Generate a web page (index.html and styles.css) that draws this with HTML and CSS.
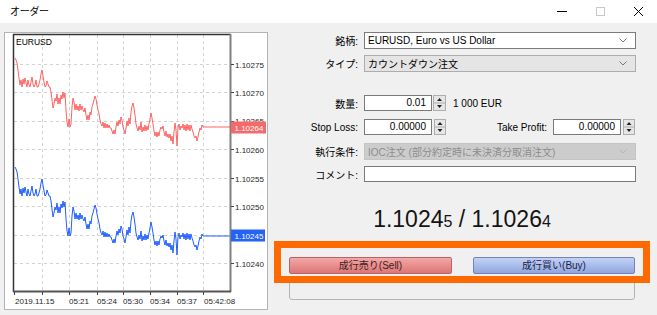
FILE: index.html
```html
<!DOCTYPE html>
<html lang="ja">
<head>
<meta charset="utf-8">
<title>オーダー</title>
<link rel="stylesheet" href="styles.css">
</head>
<body>
<div class="window">
  <div class="titlebar">
    <span class="title">オーダー</span>
    <div class="controls">
      <svg class="ctl ctl-min" width="11" height="11" viewBox="0 0 11 11"><line x1="0" y1="5.5" x2="10" y2="5.5" stroke="#000" stroke-width="1"/></svg>
      <svg class="ctl ctl-max" width="11" height="11" viewBox="0 0 11 11"><rect x="1.5" y="1.5" width="8" height="8" fill="none" stroke="#c8c8c8" stroke-width="1"/></svg>
      <svg class="ctl ctl-close" width="11" height="11" viewBox="0 0 11 11"><path d="M1 1 L10 10 M10 1 L1 10" stroke="#000" stroke-width="1" fill="none"/></svg>
    </div>
  </div>

  <div class="main">
    <div class="chart">
      <svg class="chart-svg" width="262" height="276" viewBox="5 33 262 276">
        <defs>
          <polyline id="tick-path" fill="none"
            points="15,58 16,60 17,63 18,70 19,78 20,85 21,80 22,87 23,79 24,84 25,78 26,83 27,87 28,80 29,85 30,87 31,82 32,77 33,84 34,87 35,85 36,80 37,87 38,87 39,84 40,80 41,74 42,70 43,76 44,82 45,87 46,86 47,81 48,84 49,87 50,87 51,92 52,100 53,108 54,104 55,98 56,101 57,94 58,104 59,98 60,104 61,95 62,99 63,92 64,98 65,93 66,110 67,122 68,127 69,119 70,127 71,124 72,107 73,98 74,102 75,110 76,104 77,110 78,106 79,111 80,104 81,110 82,106 83,110 84,112 85,108 86,115 87,120 88,115 89,120 90,112 91,115 92,107 93,104 94,100 95,96 96,99 97,105 98,110 99,114 100,120 101,124 102,126 103,122 104,128 105,123 106,128 107,124 108,128 109,125 110,128 111,128 112,131 113,134 114,130 115,134 116,127 117,122 118,126 119,120 120,124 121,117 122,120 123,127 124,130 125,134 126,128 127,121 128,126 129,118 130,124 131,112 132,106 133,103 134,108 135,115 136,124 137,128 138,131 139,126 140,130 141,122 142,132 143,127 144,131 145,125 146,131 147,126 148,130 149,124 150,119 151,113 152,118 153,124 154,131 155,136 156,132 157,137 158,132 159,136 160,130 161,127 162,129 163,126 164,132 165,136 166,131 167,137 168,134 169,138 170,134 171,141 172,136 173,144 174,132 175,123 176,130 177,146 178,128 179,124 180,130 181,126 182,128 183,124 184,130 185,125 186,131 187,124 188,130 189,125 190,131 191,125 192,129 193,132 194,136 195,138 196,136 197,141 198,137 199,132 200,128 201,130 202,125 203,127 230,127"/>
        </defs>

        <g class="grid" stroke="#d2d2d2" stroke-width="1" stroke-dasharray="3,3">
          <line x1="14" y1="64.5" x2="230" y2="64.5"/>
          <line x1="14" y1="92.5" x2="230" y2="92.5"/>
          <line x1="14" y1="121.5" x2="230" y2="121.5"/>
          <line x1="14" y1="149.5" x2="230" y2="149.5"/>
          <line x1="14" y1="178.5" x2="230" y2="178.5"/>
          <line x1="14" y1="206.5" x2="230" y2="206.5"/>
          <line x1="14" y1="235.5" x2="230" y2="235.5"/>
          <line x1="14" y1="263.5" x2="230" y2="263.5"/>
          <line x1="42.5" y1="35" x2="42.5" y2="291"/>
          <line x1="69.5" y1="35" x2="69.5" y2="291"/>
          <line x1="97.5" y1="35" x2="97.5" y2="291"/>
          <line x1="123.5" y1="35" x2="123.5" y2="291"/>
          <line x1="150.5" y1="35" x2="150.5" y2="291"/>
          <line x1="177.5" y1="35" x2="177.5" y2="291"/>
          <line x1="203.5" y1="35" x2="203.5" y2="291"/>
        </g>

        <use href="#tick-path" stroke="#ff6464" stroke-width="1"/>
        <use href="#tick-path" stroke="#1f5fff" stroke-width="1" transform="translate(0,109)"/>

        <g class="frame">
          <line x1="13.5" y1="34" x2="13.5" y2="292" stroke="#333" stroke-width="1.5"/>
          <line x1="13" y1="34.5" x2="231" y2="34.5" stroke="#333" stroke-width="1.5"/>
          <line x1="230.5" y1="34" x2="230.5" y2="292" stroke="#808080" stroke-width="2"/>
          <line x1="13" y1="291.5" x2="231" y2="291.5" stroke="#555" stroke-width="2"/>
        </g>

        <g class="ticks" stroke="#444" stroke-width="1">
          <line x1="231" y1="64.5" x2="234" y2="64.5"/>
          <line x1="231" y1="92.5" x2="234" y2="92.5"/>
          <line x1="231" y1="121.5" x2="234" y2="121.5"/>
          <line x1="231" y1="149.5" x2="234" y2="149.5"/>
          <line x1="231" y1="178.5" x2="234" y2="178.5"/>
          <line x1="231" y1="206.5" x2="234" y2="206.5"/>
          <line x1="231" y1="235.5" x2="234" y2="235.5"/>
          <line x1="231" y1="263.5" x2="234" y2="263.5"/>
          <line x1="14.5" y1="292" x2="14.5" y2="295"/>
          <line x1="42.5" y1="292" x2="42.5" y2="295"/>
          <line x1="69.5" y1="292" x2="69.5" y2="295"/>
          <line x1="97.5" y1="292" x2="97.5" y2="295"/>
          <line x1="123.5" y1="292" x2="123.5" y2="295"/>
          <line x1="150.5" y1="292" x2="150.5" y2="295"/>
          <line x1="177.5" y1="292" x2="177.5" y2="295"/>
          <line x1="203.5" y1="292" x2="203.5" y2="295"/>
        </g>

        <text class="sym" x="16" y="44.5">EURUSD</text>

        <g class="axis">
          <text x="235" y="67.5">1.10275</text>
          <text x="235" y="95.5">1.10270</text>
          <text x="235" y="123.5">1.10265</text>
          <text x="235" y="152.5">1.10260</text>
          <text x="235" y="181.5">1.10255</text>
          <text x="235" y="209.5">1.10250</text>
          <text x="235" y="266.5">1.10240</text>
          <text x="15" y="303.5">2019.11.15</text>
          <text x="69" y="303.5">05:21</text>
          <text x="97" y="303.5">05:24</text>
          <text x="123" y="303.5">05:30</text>
          <text x="150" y="303.5">05:34</text>
          <text x="177" y="303.5">05:37</text>
          <text x="204" y="303.5">05:42:08</text>
        </g>

        <rect x="231" y="121.5" width="35" height="12" fill="#f46a6a"/>
        <text class="tag" x="234.5" y="130.5">1.10264</text>
        <rect x="231" y="229.5" width="34" height="12" fill="#2463f4"/>
        <text class="tag" x="234.5" y="238.5">1.10245</text>
      </svg>
    </div>

    <div class="form">
      <div class="row r-symbol">
        <span class="lbl">銘柄:</span>
        <div class="combo combo-white"><span>EURUSD, Euro vs US Dollar</span>
          <svg class="chev" width="8" height="5" viewBox="0 0 8 5"><polyline points="0.5,0.5 4,4 7.5,0.5" fill="none" stroke="#777" stroke-width="1"/></svg>
        </div>
      </div>
      <div class="row r-type">
        <span class="lbl">タイプ:</span>
        <div class="combo combo-grey"><span>カウントダウン注文</span>
          <svg class="chev" width="8" height="5" viewBox="0 0 8 5"><polyline points="0.5,0.5 4,4 7.5,0.5" fill="none" stroke="#777" stroke-width="1"/></svg>
        </div>
      </div>
      <div class="row r-vol">
        <span class="lbl">数量:</span>
        <div class="num">0.01</div>
        <svg class="spin spin-a" width="13" height="16" viewBox="0 0 13 16"><rect x="0.5" y="0.5" width="12" height="15" fill="#e6e6e6" stroke="#adadad"/><line x1="1" y1="8" x2="12" y2="8" stroke="#adadad"/><path d="M4 6 L6.5 3 L9 6 Z" fill="#222"/><path d="M4 10 L6.5 13 L9 10 Z" fill="#222"/></svg>
        <span class="unit">1 000 EUR</span>
      </div>
      <div class="row r-sl">
        <span class="lbl">Stop Loss:</span>
        <div class="num">0.00000</div>
        <svg class="spin spin-b" width="12" height="16" viewBox="0 0 12 16"><rect x="0.5" y="0.5" width="11" height="15" fill="#e6e6e6" stroke="#adadad"/><line x1="1" y1="8" x2="11" y2="8" stroke="#adadad"/><path d="M3.5 6 L6 3 L8.5 6 Z" fill="#222"/><path d="M3.5 10 L6 13 L8.5 10 Z" fill="#222"/></svg>
        <span class="lbl lbl-tp">Take Profit:</span>
        <div class="num">0.00000</div>
        <svg class="spin spin-b" width="12" height="16" viewBox="0 0 12 16"><rect x="0.5" y="0.5" width="11" height="15" fill="#e6e6e6" stroke="#adadad"/><line x1="1" y1="8" x2="11" y2="8" stroke="#adadad"/><path d="M3.5 6 L6 3 L8.5 6 Z" fill="#222"/><path d="M3.5 10 L6 13 L8.5 10 Z" fill="#222"/></svg>
      </div>
      <div class="row r-fill">
        <span class="lbl">執行条件:</span>
        <div class="combo combo-dis"><span>IOC注文 (部分約定時に未決済分取消注文)</span>
          <svg class="chev" width="8" height="5" viewBox="0 0 8 5"><polyline points="0.5,0.5 4,4 7.5,0.5" fill="none" stroke="#b4b4b4" stroke-width="1"/></svg>
        </div>
      </div>
      <div class="row r-comment">
        <span class="lbl">コメント:</span>
        <div class="text-input"></div>
      </div>

      <div class="price">1.1024<span class="small">5</span> / 1.1026<span class="small">4</span></div>

      <div class="buttons">
        <div class="btn btn-sell">成行売り(Sell)</div>
        <div class="btn btn-buy">成行買い(Buy)</div>
      </div>
      <div class="status-box"></div>
    </div>
  </div>

  <div class="highlight"></div>
</div>
</body>
</html>
```

FILE: styles.css
```css
* { box-sizing: border-box; }

html, body {
  margin: 0;
  padding: 0;
  background: #f0f0f0;
}

body {
  font-family: "Liberation Sans", "Noto Sans CJK JP", sans-serif;
  font-size: 10px;
  color: #000;
}

.window {
  position: relative;
  width: 657px;
  height: 315px;
  overflow: hidden;
  background: #f0f0f0;
}

/* title bar */
.titlebar {
  height: 23px;
  background: #fff;
  display: flex;
  align-items: center;
  justify-content: space-between;
  padding-left: 10px;
}

.title {
  font-family: "Noto Sans CJK JP", sans-serif;
  font-size: 10px;
  letter-spacing: -0.3px;
  margin-top: -2px;
}

.controls {
  display: flex;
  align-items: center;
  margin-top: -1px;
}

.ctl { display: block; }
.ctl-min { margin-right: 27px; }
.ctl-max { margin-right: 27px; }
.ctl-close { margin-right: 13px; }

/* main */
.main {
  display: flex;
  align-items: flex-start;
  height: 292px;
}

.chart {
  margin: 9px 0 0 4px;
  width: 264px;
  height: 278px;
  background: #fff;
  border: 1px solid #b4b4b4;
}

.chart-svg { display: block; }

.chart-svg text {
  font-family: "Liberation Sans", sans-serif;
  font-size: 8px;
  fill: #1e1e1e;
}

.chart-svg .sym { font-size: 8.5px; fill: #000; }
.chart-svg .tag { fill: #fff; }

/* form */
.form {
  margin-left: 8px;
  width: 381px;
  padding-top: 9px;
  display: flex;
  flex-direction: column;
}

.row {
  display: flex;
  align-items: center;
}

.lbl {
  width: 82px;
  margin-right: 6px;
  text-align: right;
  white-space: nowrap;
}

.r-symbol { height: 17px; }
.r-type { height: 17px; margin-top: 6px; }
.r-vol { height: 16px; margin-top: 23px; }
.r-sl { height: 16px; margin-top: 8px; }
.r-fill { height: 17px; margin-top: 8px; }
.r-comment { height: 16px; margin-top: 6px; }

.combo {
  width: 272px;
  height: 100%;
  display: flex;
  align-items: center;
  justify-content: space-between;
  padding: 0 8px 0 3px;
  white-space: nowrap;
}

.combo-white { background: #fff; border: 1px solid #7a7a7a; }
.combo-grey { background: #e5e5e5; border: 1px solid #adadad; }
.combo-dis { background: #cccccc; border: 1px solid #c4c4c4; color: #8c8c8c; }

.chev { display: block; flex: none; }

.num {
  width: 68px;
  height: 100%;
  background: #fff;
  border: 1px solid #7a7a7a;
  text-align: right;
  padding-right: 5px;
  line-height: 14px;
}

.spin { display: block; flex: none; }
.spin-a { margin-left: 1px; }
.spin-b { margin-left: 2px; }

.unit { margin-left: 7px; }

.lbl-tp {
  width: 101px;
  margin-right: 6px;
}

.text-input {
  width: 272px;
  height: 100%;
  background: #fff;
  border: 1px solid #7a7a7a;
}

.price {
  margin: 25px 0 0 13px;
  width: 346px;
  height: 24px;
  text-align: center;
  font-size: 23px;
  line-height: 24px;
  color: #141414;
  white-space: nowrap;
}

.price .small { font-size: 16px; }

.buttons {
  margin: 26px 0 0 13px;
  width: 346px;
  height: 17px;
  display: flex;
  justify-content: space-between;
}

.btn {
  width: 163px;
  height: 17px;
  border-radius: 2px;
  text-align: center;
  line-height: 15px;
  font-size: 10px;
  white-space: nowrap;
}

.btn-sell {
  background: linear-gradient(#f6a6a6, #dc7676);
  border: 1px solid #b86464;
  color: #3c1c1c;
}

.btn-buy {
  width: 162px;
  background: linear-gradient(#c2d2f8, #92a6dc);
  border: 1px solid #7282bc;
  color: #1a2448;
}

.status-box {
  margin: 5px 0 0 13px;
  width: 346px;
  height: 21px;
  border: 1px solid #b4b4b4;
  border-radius: 3px;
}

/* orange annotation frame lying over the buttons */
.highlight {
  position: absolute;
  left: 274px;
  top: 241px;
  width: 376px;
  height: 42px;
  border: 7px solid #ff6a00;
}
```
